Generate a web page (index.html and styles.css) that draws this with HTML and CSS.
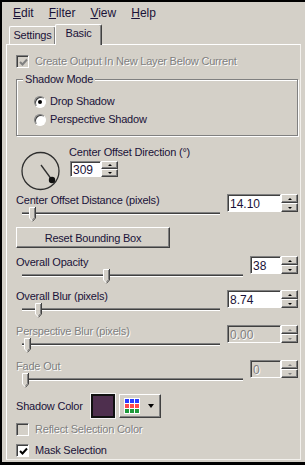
FILE: index.html
```html
<!DOCTYPE html>
<html lang="en">
<head>
    <meta charset="UTF-8">
    <title>Drop Shadow</title>
    <link rel="stylesheet" href="styles.css">
</head>
<body>
<div class="window">
    <div class="menubar">
        <span class="menu"><u>E</u>dit</span>
        <span class="menu"><u>F</u>ilter</span>
        <span class="menu"><u>V</u>iew</span>
        <span class="menu"><u>H</u>elp</span>
    </div>
    <div class="tabs">
        <div class="tab">Settings</div>
        <div class="tab active">Basic</div>
    </div>
    <div class="panel">
        <div class="check disabled first">
            <span class="box checked"><svg width="9" height="9" viewBox="0 0 9 9"><path d="M1 4 L3.5 6.5 L8 1.5" fill="none" stroke="#808080" stroke-width="2"/></svg></span>
            Create Output In New Layer Below Current
        </div>

        <div class="group">
            <div class="group-title">Shadow Mode</div>
            <div class="radio-list">
                <div class="radio-row"><span class="radio on"></span>Drop Shadow</div>
                <div class="radio-row"><span class="radio"></span>Perspective Shadow</div>
            </div>
        </div>

        <div class="dial-row">
            <svg class="dial" width="44" height="44" viewBox="0 0 44 44">
                <circle cx="21.5" cy="22" r="18.5" fill="none" stroke="#2e2e2e" stroke-width="1.3"/>
                <line x1="22" y1="16" x2="33" y2="31" stroke="#2e2e2e" stroke-width="1.3"/>
                <circle cx="33" cy="31" r="3.2" fill="#111"/>
            </svg>
            <div class="dial-side">
                <div class="label">Center Offset Direction (°)</div>
                <div class="num">
                    <div class="field narrow short">309</div>
                    <div class="spin short"><span class="up"></span><span class="down"></span></div>
                </div>
            </div>
        </div>

        <div class="slider-block b-first">
            <div class="slider-main">
                <div class="label">Center Offset Distance (pixels)</div>
                <div class="slider">
                    <div class="track"></div>
                    <svg class="thumb" style="left: 7px" width="7" height="15" viewBox="0 0 7 15"><polygon points="1,1 6,1 6,11 3.5,13.5 1,11" fill="#d4d0c8"/><polyline points="0.5,11 0.5,0.5 6,0.5" fill="none" stroke="#fff"/><polyline points="0.5,11 3.5,14" fill="none" stroke="#fff"/><polyline points="6.5,0 6.5,11 3.5,14.3" fill="none" stroke="#404040"/><polyline points="5.5,1 5.5,10.7 3.5,12.8" fill="none" stroke="#808080"/></svg>
                </div>
            </div>
            <div class="num">
                <div class="field wide">14.10</div>
                <div class="spin"><span class="up"></span><span class="down"></span></div>
            </div>
        </div>

        <button class="reset raised">Reset Bounding Box</button>

        <div class="slider-block b-opacity">
            <div class="slider-main">
                <div class="label">Overall Opacity</div>
                <div class="slider">
                    <div class="track"></div>
                    <svg class="thumb" style="left: 81px" width="7" height="15" viewBox="0 0 7 15"><polygon points="1,1 6,1 6,11 3.5,13.5 1,11" fill="#d4d0c8"/><polyline points="0.5,11 0.5,0.5 6,0.5" fill="none" stroke="#fff"/><polyline points="0.5,11 3.5,14" fill="none" stroke="#fff"/><polyline points="6.5,0 6.5,11 3.5,14.3" fill="none" stroke="#404040"/><polyline points="5.5,1 5.5,10.7 3.5,12.8" fill="none" stroke="#808080"/></svg>
                </div>
            </div>
            <div class="num">
                <div class="field narrow">38</div>
                <div class="spin"><span class="up"></span><span class="down"></span></div>
            </div>
        </div>

        <div class="slider-block b-blur">
            <div class="slider-main">
                <div class="label">Overall Blur (pixels)</div>
                <div class="slider">
                    <div class="track"></div>
                    <svg class="thumb" style="left: 13px" width="7" height="15" viewBox="0 0 7 15"><polygon points="1,1 6,1 6,11 3.5,13.5 1,11" fill="#d4d0c8"/><polyline points="0.5,11 0.5,0.5 6,0.5" fill="none" stroke="#fff"/><polyline points="0.5,11 3.5,14" fill="none" stroke="#fff"/><polyline points="6.5,0 6.5,11 3.5,14.3" fill="none" stroke="#404040"/><polyline points="5.5,1 5.5,10.7 3.5,12.8" fill="none" stroke="#808080"/></svg>
                </div>
            </div>
            <div class="num">
                <div class="field wide">8.74</div>
                <div class="spin"><span class="up"></span><span class="down"></span></div>
            </div>
        </div>

        <div class="slider-block b-next disabled">
            <div class="slider-main">
                <div class="label">Perspective Blur (pixels)</div>
                <div class="slider">
                    <div class="track"></div>
                    <svg class="thumb" style="left: 2px" width="7" height="15" viewBox="0 0 7 15"><polygon points="1,1 6,1 6,11 3.5,13.5 1,11" fill="#d4d0c8"/><polyline points="0.5,11 0.5,0.5 6,0.5" fill="none" stroke="#fff"/><polyline points="0.5,11 3.5,14" fill="none" stroke="#fff"/><polyline points="6.5,0 6.5,11 3.5,14.3" fill="none" stroke="#404040"/><polyline points="5.5,1 5.5,10.7 3.5,12.8" fill="none" stroke="#808080"/></svg>
                </div>
            </div>
            <div class="num">
                <div class="field wide">0.00</div>
                <div class="spin"><span class="up"></span><span class="down"></span></div>
            </div>
        </div>

        <div class="slider-block b-next disabled">
            <div class="slider-main">
                <div class="label">Fade Out</div>
                <div class="slider">
                    <div class="track"></div>
                    <svg class="thumb" style="left: 0px" width="7" height="15" viewBox="0 0 7 15"><polygon points="1,1 6,1 6,11 3.5,13.5 1,11" fill="#d4d0c8"/><polyline points="0.5,11 0.5,0.5 6,0.5" fill="none" stroke="#fff"/><polyline points="0.5,11 3.5,14" fill="none" stroke="#fff"/><polyline points="6.5,0 6.5,11 3.5,14.3" fill="none" stroke="#404040"/><polyline points="5.5,1 5.5,10.7 3.5,12.8" fill="none" stroke="#808080"/></svg>
                </div>
            </div>
            <div class="num">
                <div class="field narrow">0</div>
                <div class="spin"><span class="up"></span><span class="down"></span></div>
            </div>
        </div>

        <div class="color-row">
            <span class="label">Shadow Color</span>
            <span class="swatch"></span>
            <span class="pick raised">
                <svg width="16" height="16" viewBox="0 0 16 16">
                    <rect width="16" height="16" fill="#fff"/>
                    <rect x="1" y="1" width="4" height="4" fill="#2a3cff"/><rect x="6" y="1" width="4" height="4" fill="#2a3cff"/><rect x="11" y="1" width="4" height="4" fill="#2a3cff"/>
                    <rect x="1" y="6" width="4" height="4" fill="#ff4a4a"/><rect x="6" y="6" width="4" height="4" fill="#ff4a4a"/><rect x="11" y="6" width="4" height="4" fill="#ff4a4a"/>
                    <rect x="1" y="11" width="4" height="4" fill="#1f9a3a"/><rect x="6" y="11" width="4" height="4" fill="#1f9a3a"/><rect x="11" y="11" width="4" height="4" fill="#1f9a3a"/>
                </svg>
                <span class="arrow"></span>
            </span>
        </div>

        <div class="check disabled reflect">
            <span class="box"></span>
            Reflect Selection Color
        </div>
        <div class="check mask">
            <span class="box white"><svg width="9" height="9" viewBox="0 0 9 9"><path d="M1 4 L3.5 6.5 L8 1.5" fill="none" stroke="#000" stroke-width="2"/></svg></span>
            Mask Selection
        </div>
    </div>
</div>
</body>
</html>
```

FILE: styles.css
```css
body {
    margin: 0;
    background: #d4d0c8;
    font-family: "Liberation Sans", Arial, sans-serif;
    font-size: 11px;
    letter-spacing: -0.2px;
    color: #1a1238;
}

.window {
    width: 305px;
    height: 465px;
    box-sizing: border-box;
    border-left: 2px solid #000;
    border-top: 2px solid #000;
    border-bottom: 3px solid #000;
    display: flex;
    flex-direction: column;
    background: #d4d0c8;
}

/* menu */
.menubar {
    display: flex;
    gap: 15px;
    height: 20px;
    padding-left: 11px;
    font-size: 12px;
    letter-spacing: 0;
}

.menu {
    line-height: 22px;
}

/* tabs */
.tabs {
    display: flex;
    align-items: flex-end;
    height: 22px;
    padding-left: 7px;
}

.tab {
    width: 47px;
    height: 18px;
    box-sizing: border-box;
    padding-top: 2px;
    line-height: 13px;
    text-align: center;
    border-top: 1px solid #fff;
    border-left: 1px solid #fff;
    border-right: 1px solid #404040;
    box-shadow: inset -1px 0 0 #808080;
    border-radius: 2px 2px 0 0;
    background: #d4d0c8;
}

.tab.active {
    position: relative;
    z-index: 1;
    height: 21px;
    margin-left: -1px;
    margin-bottom: -1px;
}

.panel {
    flex: 1;
    margin: 0 4px 2px 4px;
    padding: 0 2px 0 9px;
    border: 1px solid;
    border-color: #fff #f2f0ec #f2f0ec #fff;
}

/* shared controls */
.label {
    line-height: 13px;
    white-space: nowrap;
}

.disabled,
.disabled .label,
.disabled .field {
    color: #808080;
    text-shadow: 1px 1px 0 #fff;
}

.raised {
    box-sizing: border-box;
    border: 1px solid;
    border-color: #fff #404040 #404040 #fff;
    box-shadow: inset -1px -1px 0 #808080;
    background: #d4d0c8;
}

.check {
    display: flex;
    align-items: center;
    gap: 6px;
    height: 13px;
    line-height: 13px;
    white-space: nowrap;
}

.check.first {
    margin-top: 10px;
}

.box {
    width: 13px;
    height: 13px;
    box-sizing: border-box;
    border: 1px solid;
    border-color: #808080 #fff #fff #808080;
    box-shadow: inset 1px 1px 0 #404040;
    background: #d4d0c8;
    display: flex;
    align-items: center;
    justify-content: center;
    flex-shrink: 0;
}

.box svg {
    margin: 1px 0 0 1px;
}

.box.white {
    background: #fff;
}

/* group box */
.group {
    margin-top: 11px;
    border: 1px solid #808080;
    box-shadow: inset 1px 1px 0 #fff, 1px 1px 0 #fff;
    padding-bottom: 9px;
}

.group-title {
    display: table;
    margin: -7px 0 0 6px;
    padding: 0 2px;
    line-height: 13px;
    background: #d4d0c8;
}

.radio-list {
    display: flex;
    flex-direction: column;
    gap: 5px;
    margin-top: 9px;
    padding-left: 17px;
}

.radio-row {
    display: flex;
    align-items: center;
    gap: 4px;
    height: 13px;
    line-height: 13px;
}

.radio {
    width: 12px;
    height: 12px;
    box-sizing: border-box;
    border-radius: 50%;
    border: 1px solid;
    border-color: #808080 #fff #fff #808080;
    box-shadow: inset 1px 1px 0 #404040;
    background: #fff;
    display: flex;
    align-items: center;
    justify-content: center;
}

.radio.on::after {
    content: "";
    width: 4px;
    height: 4px;
    border-radius: 50%;
    background: #000;
}

/* direction dial */
.dial-row {
    display: flex;
    align-items: flex-start;
    margin-top: 10px;
}

.dial {
    margin: 3px 6px 0 3px;
}

.dial-side .num {
    margin: 2px 0 0 1px;
}

/* number field with spinner */
.num {
    display: flex;
}

.field {
    height: 18px;
    box-sizing: border-box;
    border: 1px solid;
    border-color: #808080 #fff #fff #808080;
    box-shadow: inset 1px 1px 0 #404040;
    background: #fff;
    font-size: 12px;
    letter-spacing: 0;
    line-height: 16px;
    padding: 1px 0 0 2px;
    color: #1a1238;
}

.field.wide {
    width: 54px;
}

.field.narrow {
    width: 31px;
}

.field.short,
.spin.short {
    height: 16px;
    line-height: 14px;
}

.disabled .field {
    background: #d4d0c8;
}

.spin {
    display: flex;
    flex-direction: column;
    width: 17px;
    height: 18px;
}

.spin span {
    flex: 1;
    box-sizing: border-box;
    border: 1px solid;
    border-color: #fff #404040 #404040 #fff;
    box-shadow: inset -1px -1px 0 #808080;
    background: #d4d0c8;
    display: flex;
    align-items: center;
    justify-content: center;
}

.spin .up::after {
    content: "";
    border-left: 2px solid transparent;
    border-right: 2px solid transparent;
    border-bottom: 2px solid #000;
}

.spin .down::after {
    content: "";
    border-left: 2px solid transparent;
    border-right: 2px solid transparent;
    border-top: 2px solid #000;
}

.disabled .spin .up::after {
    border-bottom-color: #808080;
}

.disabled .spin .down::after {
    border-top-color: #808080;
}

/* slider blocks */
.slider-block {
    display: flex;
    align-items: flex-start;
}

.slider-main {
    flex: 1;
    display: flex;
    flex-direction: column;
}

.slider {
    position: relative;
    height: 16px;
    margin: 0 7px 0 6px;
}

.track {
    margin-top: 5px;
    height: 1px;
    background: #404040;
    border-top: 1px solid #808080;
    border-bottom: 1px solid #fff;
}

.thumb {
    position: absolute;
    top: 0;
}

.b-first {
    margin-top: 1px;
}

.b-opacity {
    margin-top: 8px;
}

.b-blur {
    margin-top: 5px;
}

.b-next {
    margin-top: 6px;
}

.reset {
    display: block;
    width: 154px;
    height: 21px;
    margin-top: 4px;
    padding: 0;
    font-family: inherit;
    font-size: 11px;
    letter-spacing: -0.2px;
    color: #1a1238;
}

/* shadow colour */
.color-row {
    display: flex;
    align-items: center;
    height: 24px;
    margin-top: 5px;
}

.color-row .label {
    margin-right: 8px;
}

.swatch {
    width: 24px;
    height: 24px;
    box-sizing: border-box;
    border: 2px solid #111;
    box-shadow: 0 0 0 1px #f4f4f4;
    background: #4e2f4e;
}

.pick {
    width: 42px;
    height: 24px;
    margin-left: 4px;
    padding-left: 4px;
    display: flex;
    align-items: center;
    gap: 8px;
}

.arrow {
    border-left: 3px solid transparent;
    border-right: 3px solid transparent;
    border-top: 4px solid #000;
}

.reflect {
    margin-top: 5px;
}

.mask {
    margin-top: 8px;
}
```
